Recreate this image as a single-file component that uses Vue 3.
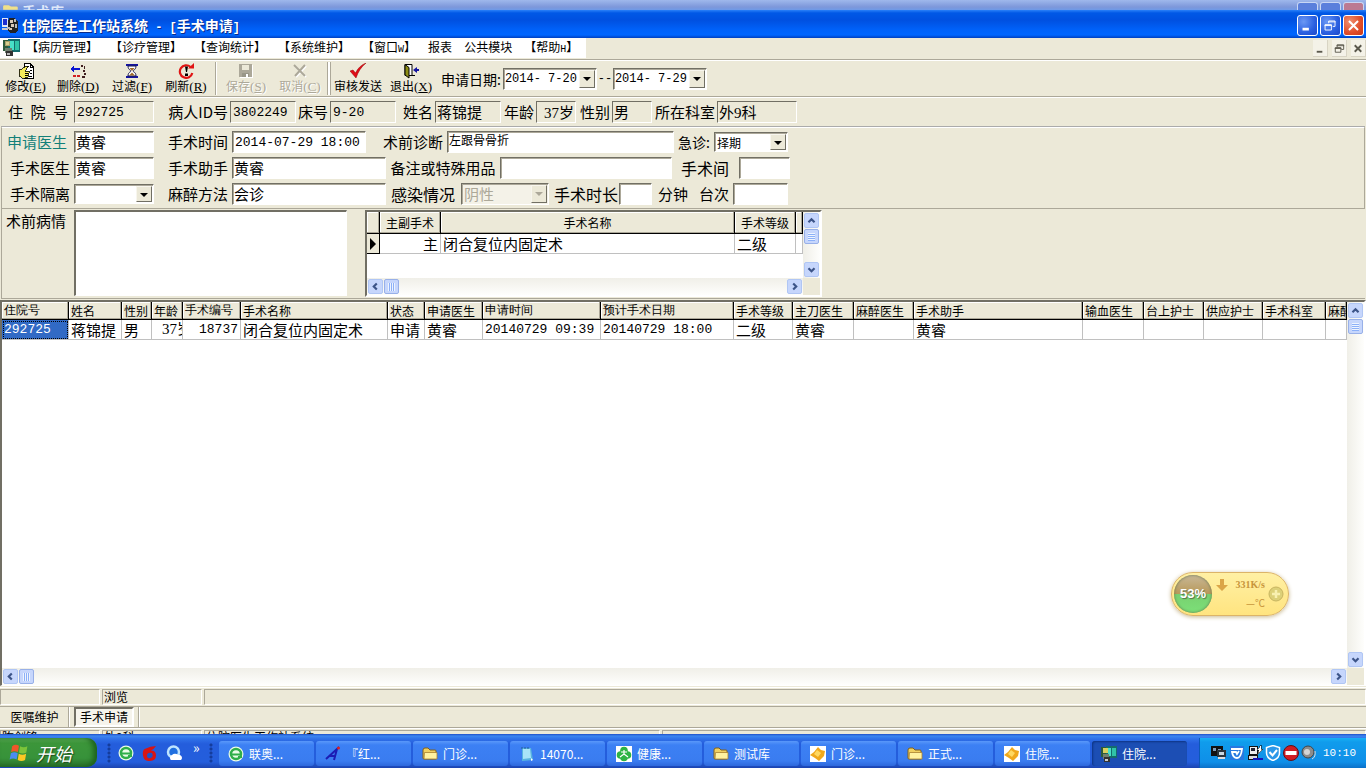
<script setup>
import { ref } from 'vue'

const menus = [
  { text: '【病历管理】' }, { text: '【诊疗管理】' }, { text: '【查询统计】' }, { text: '【系统维护】' },
  { text: '【窗口', key: 'W', end: '】' }, { text: '报表' }, { text: '公共模块' }, { text: '【帮助', key: 'H', end: '】' }
]
const tools = [
  { id: 'edit', text: '修改', key: 'E' },
  { id: 'delete', text: '删除', key: 'D' },
  { id: 'filter', text: '过滤', key: 'F' },
  { id: 'refresh', text: '刷新', key: 'R' },
  { id: 'save', text: '保存', key: 'S', off: true, sep: true },
  { id: 'cancel', text: '取消', key: 'C', off: true },
  { id: 'send', text: '审核发送', sep: true, double: true },
  { id: 'exit', text: '退出', key: 'X' }
]
const patient = [
  { id: 'zyh', label: '住\u2002院\u2002号', value: '292725', num: true },
  { id: 'pid', label: '病人ID号', value: '3802249', num: true },
  { id: 'bed', label: '床号', value: '9-20', num: true },
  { id: 'name', label: '姓名', value: '蒋锦提' },
  { id: 'age', label: '年龄', value: '37岁', right: true },
  { id: 'sex', label: '性别', value: '男' },
  { id: 'dept', label: '所在科室', value: '外9科' }
]
const columns = [
  { t: '住院号', v: '292725', c: 'w1 num picked' },
  { t: '姓名', v: '蒋锦提', c: 'w2' },
  { t: '性别', v: '男', c: 'w3' },
  { t: '年龄', v: '37岁', c: 'w4 age' },
  { t: '手术编号', v: '18737', c: 'w5 num right' },
  { t: '手术名称', v: '闭合复位内固定术', c: 'w6' },
  { t: '状态', v: '申请', c: 'w7' },
  { t: '申请医生', v: '黄睿', c: 'w8' },
  { t: '申请时间', v: '20140729 09:39', c: 'w9 num' },
  { t: '预计手术日期', v: '20140729 18:00', c: 'w10 num' },
  { t: '手术等级', v: '二级', c: 'w11' },
  { t: '主刀医生', v: '黄睿', c: 'w12' },
  { t: '麻醉医生', v: '', c: 'w13' },
  { t: '手术助手', v: '黄睿', c: 'w14' },
  { t: '输血医生', v: '', c: 'w12' },
  { t: '台上护士', v: '', c: 'w13' },
  { t: '供应护士', v: '', c: 'w11' },
  { t: '手术科室', v: '', c: 'w15' },
  { t: '麻醉', v: '', c: 'last' }
]
const tasks = [
  { icon: 'browser', text: '联奥...' },
  { icon: 'pen', text: '『红...' },
  { icon: 'folder', text: '门诊...' },
  { icon: 'note', text: '14070...' },
  { icon: 'health', text: '健康...' },
  { icon: 'folder', text: '测试库' },
  { icon: 'gold', text: '门诊...' },
  { icon: 'folder', text: '正式...' },
  { icon: 'gold', text: '住院...' },
  { icon: 'doctor', text: '住院...', on: true }
]
const notes = ref('')
</script>

<template>
  <div class="screen">
    <div class="behind">
      <svg class="behind-icon" viewBox="0 0 16 5" aria-hidden="true"><path d="M1 5V2q0-1 1-1h4l2 1h5q1 0 1 1v2z" fill="#f0e08a" /></svg>
      <span class="behind-title">手术库</span>
      <i class="bb"></i><i class="bb"></i><i class="bb red"></i>
    </div>

    <header class="title">
      <svg class="i16" viewBox="0 0 16 16" shape-rendering="crispEdges" aria-hidden="true">
        <path d="M0 1h6v9H0z" fill="#dfe6f6" /><path d="M1 2h4v6H1z" fill="#1c2ed0" /><path d="M0 11h8v2H0z" fill="#c8c8d0" />
        <path d="M7 1h6l3 4v8l-2 3H8l-2-3V5z" fill="#222" /><path d="M8 3h3v3H8zM9 7h3v3H9zM7 11h3v2H7z" fill="#d8c8b8" /><path d="M12 2h2v3h-2zM13 7h2v4h-2zM5 10h3v2H5z" fill="#b8b8b8" />
      </svg>
      <h1>住院医生工作站系统<span class="n12"> - [</span>手术申请<span class="n12">]</span></h1>
      <button class="wb" aria-label="最小化"><svg viewBox="0 0 21 21"><path d="M5 13h7v3H5z" fill="#fff" /></svg></button>
      <button class="wb" aria-label="还原"><svg viewBox="0 0 21 21" fill="none" stroke="#fff"><path d="M8.500 8V5.500h7v6H13M8 6.500h8M4.500 9.500h7v6h-7zM4 10.500h8" /></svg></button>
      <button class="wb close" aria-label="关闭"><svg viewBox="0 0 21 21"><path d="M5.500 5.500l10 10M15.500 5.500l-10 10" stroke="#fff" stroke-width="2.200" /></svg></button>
    </header>

    <div class="menubar">
      <nav class="menus" aria-label="主菜单">
        <svg class="i17" viewBox="0 0 16 16" shape-rendering="crispEdges" aria-hidden="true">
          <path d="M0 1h8v10H0z" fill="#2c5a3c" /><path d="M5 0h11v12H5z" fill="#146c6c" /><path d="M7 2h3v8H7z" fill="#48e0c8" /><path d="M11 2h4v8h-4z" fill="#30c4a8" />
          <path d="M2 2h5v5H2z" fill="#a9a16c" /><path d="M3 3h3v3H3z" fill="#d8d090" /><path d="M2 8h6v5H2z" fill="#708070" /><path d="M3 11h6v5H3z" fill="#333" /><path d="M4 13h3v2H4z" fill="#bbb" />
        </svg>
        <button v-for="m in menus" :key="m.text" class="menu">{{ m.text }}<span v-if="m.key" class="n10">{{ m.key }}</span>{{ m.end }}</button>
      </nav>
      <div class="mdi">
        <button aria-label="最小化子窗口"><svg viewBox="0 0 15 15"><path d="M4 10h6v2H4z" fill="#5a584c" /></svg></button>
        <button aria-label="还原子窗口"><svg viewBox="0 0 15 15" fill="none" stroke="#5a584c"><path d="M5.500 6V3.500h7v5H10M5 4.500h8M3.500 6.500h6v5h-6zM3 7.500h7" /></svg></button>
        <button aria-label="关闭子窗口"><svg viewBox="0 0 15 15"><path d="M4 4l7 7M11 4l-7 7" stroke="#5a584c" stroke-width="2" /></svg></button>
      </div>
    </div>

    <div class="toolbar">
      <template v-for="t in tools" :key="t.id">
        <i v-if="t.sep" class="sep" :class="{ double: t.double }"></i>
        <button class="tool" :class="{ off: t.off }" :disabled="t.off">
          <svg class="i16" viewBox="0 0 16 16" aria-hidden="true">
            <g v-if="t.id === 'edit'" shape-rendering="crispEdges">
              <path d="M6 .5h6L15.500 4v11.500H6z" fill="#fff" stroke="#000" /><path d="M12 1v3.500h3" fill="none" stroke="#000" /><path d="M8 3h3M12 7h2M12 10h2M11 13h3" stroke="#000" />
              <path d="M1 7l3-1 4-3 2 1-3 4h4v2l-1 4-3 1H4l-3-2z" fill="#f5ec5a" stroke="#000" stroke-width=".8" /><path d="M7 10h3M7 12h3" stroke="#000" />
            </g>
            <g v-else-if="t.id === 'delete'" shape-rendering="crispEdges">
              <path d="M3 5h7v2H3z" fill="#0a14d0" /><path d="M0 6l4-4v8z" fill="#0a14d0" /><path d="M3 12h3v2H3zM7 12h3v2H7z" fill="#d02020" /><path d="M11 2h2v2h-2zM14 3h1v3h-1zM13 7h2v2h-2zM14 10h2v2h-2zM12 13h3v2h-3z" fill="#402020" />
            </g>
            <g v-else-if="t.id === 'filter'">
              <path d="M2 1h12v2H2zM2 13h12v2H2z" fill="#1414a0" /><path d="M4 3c0 4 3 4 3 5s-3 1-3 5h8c0-4-3-4-3-5s3-1 3-5z" fill="#fff" stroke="#1a1a50" /><path d="M5.500 5h5L8 8zM8 9.500l3 3H5z" fill="#a06a28" />
            </g>
            <g v-else-if="t.id === 'refresh'">
              <path d="M12.500 4A6.300 6.300 0 1 0 14.300 10" fill="none" stroke="#e01414" stroke-width="2.200" /><path d="M10 5.500h6V0z" fill="#e01414" /><path d="M7 3.500h3L9 9H8zM7 10.500h3v2.500H7z" fill="#000" />
            </g>
            <g v-else-if="t.id === 'save'" shape-rendering="crispEdges">
              <path d="M2 2h13v13H2z" fill="#fff" /><path d="M1 1h13v13H1z" fill="#aca899" /><path d="M4 2h7v5H4z" fill="#ece9d8" /><path d="M4 10h7v4H4z" fill="#999688" /><path d="M8 11h2v3H8z" fill="#fff" />
            </g>
            <g v-else-if="t.id === 'cancel'">
              <path d="M3 3l11 11M14 3L4 14" stroke="#fff" stroke-width="2" /><path d="M2 2l11 11M13 2L3 13" stroke="#aca899" stroke-width="2" />
            </g>
            <g v-else-if="t.id === 'send'"><path d="M0 8l3-1 2.500 3C8 5 11 2 16 0 11 4 8 9 6 15z" fill="#e00c18" stroke="#900" stroke-width=".5" /></g>
            <g v-else>
              <path d="M2 1.500h7v11H2z" fill="#fff" stroke="#000" /><path d="M2 1.500l4 3V15l-4-3z" fill="#8c8c14" stroke="#000" /><path d="M9 12.500h3" stroke="#000" /><path d="M10 7l4-3v2h2v2h-2v2z" fill="#1414a0" />
            </g>
          </svg>
          <span>{{ t.text }}<span v-if="t.key" class="key">(<u>{{ t.key }}</u>)</span></span>
        </button>
      </template>
      <div class="dates">
        <label for="d1">申请日期:</label>
        <span class="combo"><select id="d1"><option>2014-&nbsp;7-20</option></select><i class="drop"></i></span>
        <label for="d2" class="dash">--</label>
        <span class="combo"><select id="d2"><option>2014-&nbsp;7-29</option></select><i class="drop"></i></span>
      </div>
    </div>

    <main class="work">
      <div class="row patient">
        <template v-for="p in patient" :key="p.id">
          <label :for="p.id">{{ p.label }}</label>
          <input :id="p.id" class="box" :class="{ num: p.num, right: p.right }" :value="p.value" readonly>
        </template>
      </div>

      <section class="form">
        <div class="row r1">
          <label for="f1" class="teal">申请医生</label><input id="f1" class="box" value="黄睿">
          <label for="f2">手术时间</label><input id="f2" class="box num" value="2014-07-29 18:00">
          <label for="f3">术前诊断</label><input id="f3" class="box small" value="左跟骨骨折">
          <label for="f4" class="l14">急诊:</label><span class="combo"><select id="f4"><option>择期</option></select><i class="drop"></i></span>
        </div>
        <div class="row r2">
          <label for="f5">手术医生</label><input id="f5" class="box" value="黄睿">
          <label for="f6">手术助手</label><input id="f6" class="box" value="黄睿">
          <label for="f7" class="mid">备注或特殊用品</label><input id="f7" class="box">
          <label for="f8" class="l16 mid">手术间</label><input id="f8" class="box">
        </div>
        <div class="row r3">
          <label for="f9">手术隔离</label><span class="combo"><select id="f9"><option></option></select><i class="drop"></i></span>
          <label for="f10">麻醉方法</label><input id="f10" class="box" value="会诊">
          <label for="f11" class="l16 mid">感染情况</label><span class="combo big off"><select id="f11" disabled><option>阴性</option></select><i class="drop"></i></span>
          <label for="f12" class="l16">手术时长</label><input id="f12" class="box">
          <span class="unit">分钟</span>
          <label for="f13">台次</label><input id="f13" class="box">
        </div>
      </section>

      <section class="detail">
        <label for="notes">术前病情</label>
        <textarea id="notes" v-model="notes"></textarea>
        <div class="sheet ops">
          <div class="sheet-body">
            <table>
              <thead><tr><th class="mark"></th><th class="o1">主副手术</th><th class="o2">手术名称</th><th class="o3">手术等级</th><th></th></tr></thead>
              <tbody><tr>
                <td class="mark"><i></i></td><td class="right">主</td><td>闭合复位内固定术</td><td>二级</td><td></td>
              </tr></tbody>
            </table>
          </div>
          <div class="vs">
            <button class="sb" aria-label="向上"><svg viewBox="0 0 15 15"><path d="M4 9.500L7.500 6 11 9.500" /></svg></button>
            <i class="thumb"></i>
            <button class="sb end" aria-label="向下"><svg viewBox="0 0 15 15"><path d="M4 6l3.500 3.500L11 6" /></svg></button>
          </div>
          <div class="hs">
            <button class="sb" aria-label="向左"><svg viewBox="0 0 15 15"><path d="M9 4L5.500 7.500 9 11" /></svg></button>
            <i class="thumb"></i>
            <button class="sb end" aria-label="向右"><svg viewBox="0 0 15 15"><path d="M6 4l3.500 3.500L6 11" /></svg></button>
          </div>
        </div>
      </section>

      <section class="sheet list">
        <div class="sheet-body">
          <table>
            <thead><tr><th v-for="(c, i) in columns" :key="i" :class="c.c">{{ c.t }}</th></tr></thead>
            <tbody><tr><td v-for="(c, i) in columns" :key="i" :class="c.c">{{ c.v }}</td></tr></tbody>
          </table>
        </div>
        <div class="vs">
          <button class="sb" aria-label="向上滚动"><svg viewBox="0 0 15 15"><path d="M4 9.500L7.500 6 11 9.500" /></svg></button>
          <i class="thumb"></i>
          <button class="sb end" aria-label="向下滚动"><svg viewBox="0 0 15 15"><path d="M4 6l3.500 3.500L11 6" /></svg></button>
        </div>
        <div class="hs">
          <button class="sb" aria-label="向左滚动"><svg viewBox="0 0 15 15"><path d="M9 4L5.500 7.500 9 11" /></svg></button>
          <i class="thumb"></i>
          <button class="sb end" aria-label="向右滚动"><svg viewBox="0 0 15 15"><path d="M6 4l3.500 3.500L6 11" /></svg></button>
        </div>
      </section>
    </main>

    <div class="status"><span></span><span>浏览</span><span class="grow"></span></div>
    <div class="tabs">
      <button class="tab">医嘱维护</button><i class="tsep"></i><button class="tab on">手术申请</button><i class="tsep"></i>
    </div>
    <div class="status under"><span>陈剑锋</span><span>外9科</span><span class="app">住院医生工作站系统</span><span class="grow"></span></div>

    <footer class="taskbar">
      <button class="start">
        <svg viewBox="0 0 20 18" aria-hidden="true">
          <path d="M3 3q3-2.500 6.500-.5L8.500 8.500Q5 7 2 8.500z" fill="#f0562a" /><path d="M10.500 3q3.500 2 7 0l-1 6q-3.500 2-7 0z" fill="#7cc43a" />
          <path d="M1.800 9.700q3.200-1.700 6.500 0l-1 6q-3.500-2-6.700 0z" fill="#4a8cf0" /><path d="M9.300 10.200q3.500 2 7 0l-1 6q-3.500 2-7 0z" fill="#fcc824" />
        </svg>
        <span>开始</span>
      </button>
      <i class="grip"></i>
      <div class="quick">
        <a href="#" aria-label="浏览器"><svg class="i16" viewBox="0 0 16 16"><circle cx="8" cy="8" r="7.500" fill="#eafbe8" /><circle cx="8" cy="8" r="5" fill="none" stroke="#2fae4a" stroke-width="2.500" /><path d="M4 8.500h8M10 11h4" stroke="#2fae4a" stroke-width="2" /></svg></a>
        <a href="#" aria-label="音乐"><svg class="i16" viewBox="0 0 16 16"><path d="M14 1q-2 3-5 4.500 5 0 5 5T8 16 1 10.500 4 3.500Q8 1 14 1z" fill="#d81414" /><path d="M10 8q-5-1-5 2.500T8.500 13 10 8z" fill="#2050c8" /></svg></a>
        <a href="#" aria-label="云浏览器"><svg class="i16" viewBox="0 0 16 16"><circle cx="7.500" cy="7" r="5.500" fill="#1f6fe0" stroke="#bfe4ff" stroke-width="2.500" /><path d="M5 15a3 3 0 0 1 1-5 4 4 0 0 1 6 0 3 3 0 0 1 3 5z" fill="#fff" /></svg></a>
        <span class="more">»</span>
      </div>
      <i class="grip"></i>
      <div class="tasks">
        <button v-for="(t, i) in tasks" :key="i" class="task" :class="{ on: t.on }">
          <svg class="i16" viewBox="0 0 16 16" aria-hidden="true">
            <g v-if="t.icon === 'browser'"><circle cx="8" cy="8" r="7.500" fill="#eafbe8" /><circle cx="8" cy="8" r="5" fill="none" stroke="#2fae4a" stroke-width="2.500" /><path d="M4 8.500h8M10 11h4" stroke="#2fae4a" stroke-width="2" /></g>
            <g v-else-if="t.icon === 'pen'"><path d="M1 13L12 3 9 14M4 10h7" fill="none" stroke="#1c1cb4" stroke-width="2" /><circle cx="13.500" cy="2" r="1.500" fill="#e02020" /></g>
            <g v-else-if="t.icon === 'folder'"><path d="M1 4q0-2 2-2h3l2 2h5q1 0 1 1v8H2q-1 0-1-1z" fill="#f0d060" stroke="#80601c" /><path d="M2.500 6.500h12.500v6.500H2z" fill="#fff2a0" stroke="#a88030" stroke-width=".8" /></g>
            <g v-else-if="t.icon === 'note'"><path d="M3 2h9l2 12-11 1z" fill="#58b4e0" /><path d="M4 3h7l1 9-8 1z" fill="#a8e4f8" /><path d="M3 1v2M6 1v2M9 1v2" stroke="#245c94" /><path d="M12 12l2 2-2 1z" fill="#fff" /></g>
            <g v-else-if="t.icon === 'health'"><path d="M0 0h16v16H0z" fill="#fff" /><g fill="#2fb444"><circle cx="8" cy="4.500" r="3.800" /><circle cx="4.500" cy="9" r="3.800" /><circle cx="11.500" cy="9" r="3.800" /><circle cx="8" cy="11.500" r="3.800" /></g><path d="M8 4v4l-4 3M8 8l4 3M5 6h6" stroke="#fff" fill="none" stroke-width="1.200" /></g>
            <g v-else-if="t.icon === 'gold'"><path d="M0 0h16v16H0z" fill="#fff" /><path d="M8 1l3 3 4 1-1 5-5 5-4-3-5-3 4-3z" fill="#f0a81c" /><path d="M7 4l4 3-3 4-4-3z" fill="#ffd860" /></g>
            <g v-else shape-rendering="crispEdges"><path d="M0 1h8v10H0z" fill="#2c5a3c" /><path d="M5 0h11v12H5z" fill="#146c6c" /><path d="M7 2h3v8H7z" fill="#48e0c8" /><path d="M11 2h4v8h-4z" fill="#30c4a8" /><path d="M2 2h5v5H2z" fill="#d8d060" /><path d="M2 8h6v5H2z" fill="#708070" /><path d="M3 11h6v5H3z" fill="#333" /><path d="M4 13h3v2H4z" fill="#ccc" /></g>
          </svg>
          <span>{{ t.text }}</span>
        </button>
      </div>
      <div class="tray">
        <svg class="i16" viewBox="0 0 16 16" shape-rendering="crispEdges"><path d="M0 1h12v10H0z" fill="#111" /><path d="M2 3h3v3H2zM7 4h3v2H7z" fill="#7f9ab8" /><path d="M6 5h9v7H6z" fill="#28343c" /><path d="M8 7h5v3H8z" fill="#c8d8e0" /><path d="M7 12h7v2H7z" fill="#ddd" /></svg>
        <svg class="i16" viewBox="0 0 16 16"><path d="M1 1h14v14H1z" fill="#2878e0" /><path d="M2 4h11q-1 9-5 9T3 7h4l1 2 2-3" fill="none" stroke="#fff" stroke-width="1.800" /></svg>
        <svg class="i16" viewBox="0 0 16 16" shape-rendering="crispEdges"><path d="M2 1h8v8H2z" fill="#eee" stroke="#111" /><path d="M4 3h4v3H4z" fill="#223" /><path d="M1 10h9v4H1z" fill="#ddd" stroke="#111" /><path d="M14 0l-4 5h2l-2 5 6-6h-2z" fill="#fff" stroke="#111" stroke-width=".6" /><path d="M6 13h10v2H6z" fill="#1414b8" /></svg>
        <svg class="i16" viewBox="0 0 16 16"><path d="M8 .5l6.500 2V8q0 5-6.500 7.500Q1.500 13 1.500 8V2.500z" fill="#2c98e8" stroke="#fff" stroke-width="1.500" /><path d="M4.500 7L7.500 10.500 12 5" fill="none" stroke="#fff" stroke-width="2" /></svg>
        <svg class="i16" viewBox="0 0 16 16"><circle cx="8" cy="8" r="7.500" fill="#d01c24" stroke="#601018" /><path d="M2.500 6h11v4h-11z" fill="#fff" /></svg>
        <svg class="i16" viewBox="0 0 16 16"><circle cx="7" cy="7" r="6" fill="#8c8c8c" stroke="#444" /><circle cx="6" cy="7" r="3" fill="#d4d4d4" /><path d="M11 14q4-2 3-8" stroke="#ddd" fill="none" /></svg>
        <time>10:10</time>
      </div>
    </footer>

    <aside class="float">
      <span class="ball">53%</span>
      <svg class="down" viewBox="0 0 12 12" aria-hidden="true"><path d="M4 0h4v6h4l-6 6-6-6h4z" fill="#dba548" /></svg>
      <span class="rates"><b>331K/s</b><span>—℃</span></span>
      <button class="plus" aria-label="加速"><svg viewBox="0 0 16 16"><circle cx="8" cy="8" r="7" fill="#dcd078" stroke="#c8b460" /><path d="M8 4v8M4 8h8" stroke="#f8f0b0" stroke-width="2.500" /></svg></button>
    </aside>
  </div>
</template>

<style>
html, body { margin: 0; background: #ece9d8; }
</style>

<style scoped>
* { box-sizing: border-box; }
.screen {
  position: relative; display: flex; flex-direction: column; height: 100vh; min-height: 560px; overflow: hidden;
  background: #ece9d8; color: #000; font: 12px/16px "Noto Sans CJK SC", sans-serif;
}
button, input, select, textarea { font: inherit; color: inherit; margin: 0; padding: 0; border-radius: 0; }
button { border: 0; background: none; white-space: nowrap; }
svg { display: block; flex: none; }
.i16 { width: 16px; height: 16px; }
.i17 { width: 17px; height: 17px; }
.num, .n10, .n12 { font-family: "Liberation Mono", monospace; }
.n10 { font-size: 10px; line-height: 1px; }
.n12 { font-size: 12px; line-height: 1px; white-space: pre; }
.key { font: 13px/1px "Liberation Serif", serif; }

.behind { display: flex; align-items: flex-end; gap: 2px; flex: none; height: 10px; overflow: hidden; padding: 0 2px; background: linear-gradient(#9fb8ec, #7d97da 70%, #6f9ae8); }
.behind-icon { width: 18px; height: 6px; }
.behind-title { flex: 1; height: 7px; overflow: hidden; color: #dfe8fa; font-weight: bold; font-size: 14px; line-height: 16px; }
.bb { width: 21px; height: 8px; border: 1px solid #c8d6f4; border-bottom: 0; border-radius: 3px 3px 0 0; background: #5a7fdc; }
.bb.red { background: #bc7a92; }

.title { display: flex; align-items: center; gap: 2px; flex: none; height: 28px; padding: 2px 2px 0; background: linear-gradient(#2a80f8 0, #0058e6 3px, #0050e0 10px, #0062fa 20px, #0066ff 25px, #0040c0 28px); }
.title h1 { flex: 1; margin: 0 0 0 2px; font-size: 14px; line-height: 20px; color: #fff; text-shadow: 1px 1px #0a2a8a; white-space: nowrap; }
.wb { width: 21px; height: 21px; border: 1px solid #fff; border-radius: 3px; background: radial-gradient(circle at 30% 30%, #6a98f4, #2a5fe0 60%, #1c48c8); }
.wb svg { width: 19px; height: 19px; }
.wb.close { background: radial-gradient(circle at 30% 30%, #f09070, #e04c28 60%, #c83818); }

.menubar { display: flex; justify-content: space-between; flex: none; height: 22px; border-bottom: 1px solid #aca899; }
.menus { display: flex; align-items: center; gap: 12px; height: 20px; padding: 0 8px 2px 3px; background: #fff; }
.menus .i17 { margin-right: -6px; }
.menu { font-size: 12px; line-height: 16px; }
.mdi { display: flex; gap: 4px; padding-top: 2px; }
.mdi button { width: 15px; height: 17px; background: #f4f2e8; border-right: 1px solid #d8d4c4; border-bottom: 1px solid #d8d4c4; }
.mdi svg { width: 14px; height: 15px; }

.toolbar { display: flex; align-items: center; flex: none; height: 37px; border-top: 1px solid #fff; border-bottom: 1px solid #aca899; }
.tool { display: flex; flex-direction: column; align-items: center; width: 54px; height: 32px; line-height: 14px; }
.tool:first-child { width: 51px; }
.tool:last-of-type { width: 52px; }
.tool.off { color: #aca899; text-shadow: 1px 1px #fff; }
.sep { width: 2px; height: 33px; margin: 0 2px; border-left: 1px solid #aca899; border-right: 1px solid #fff; }
.sep.double { width: 4px; margin: 0; border: 1px solid #aca899; border-width: 0 1px; background: #fff; }
.dates { display: flex; align-items: center; padding-left: 4px; font-size: 14px; }
.dates .combo { width: 94px; height: 22px; }
.dates .combo select { padding-left: 1px; font: 12px "Liberation Mono", monospace; }
.dates label { padding-right: 2px; }
.dates .dash { width: 16px; padding: 0; text-align: center; font: 12px "Liberation Mono", monospace; }

.combo { position: relative; display: flex; height: 20px; border: 1px solid; border-color: #716f64 #fff #fff #716f64; box-shadow: inset 1px 1px #aca899; background: #fff; font-size: 12px; }
.combo select { width: 100%; border: 0; padding: 0 18px 0 2px; appearance: none; background: none; opacity: 1; }
.combo.big { height: 22px; font-size: 15px; }
.combo.off { background: #f4f2e8; color: #aca899; }
.drop { position: absolute; top: 1px; right: 1px; bottom: 1px; width: 16px; pointer-events: none; background: #ece9d8; border: 1px solid; border-color: #f8f6ee #716f64 #716f64 #f8f6ee; }
.drop::after { content: ""; position: absolute; left: 3px; top: 6px; border: 4px solid transparent; border-top-color: currentColor; border-bottom: 0; }

.work { display: flex; flex: 1; flex-direction: column; min-height: 0; border-top: 1px solid #fff; }
.row { display: grid; align-items: center; font-size: 15px; line-height: 20px; white-space: nowrap; }
.row label { padding-right: 4px; text-align: right; }
.row .mid { padding: 0; text-align: center; }
.row .teal { padding-right: 7px; color: #128078; }
.row .l14 { font-size: 14px; }
.row .l16 { padding-right: 1px; font-size: 16px; }
.box { min-width: 0; width: 100%; height: 22px; padding: 0 1px 2px; border: 1px solid; border-color: #716f64 #fff #fff #716f64; box-shadow: inset 1px 1px #aca899; background: #fff; font: 15px "Liberation Serif", "Noto Sans CJK SC", serif; outline: 0; }
.box.num { padding-left: 2px; padding-bottom: 0; font: 13px "Liberation Mono", monospace; }
.box.small { font-size: 12px; padding-bottom: 4px; }
.right { text-align: right; }
.patient { flex: none; height: 28px; grid-template-columns: 74px 80px 76px 66px 34px 66px 39px 66px 35px 40px 36px 40px 65px 80px; }
.patient .box { background: #ece9d8; box-shadow: none; }
.patient label { padding-right: 2px; }
.patient label:first-child { padding-right: 6px; }
.form { display: flex; flex-direction: column; gap: 4px; flex: none; height: 83px; padding: 3px 0 0; margin: 0 1px; border: 1px solid #aca899; border-top: 2px groove #fff; }
.r1 { grid-template-columns: 72px 80px 78px 134px 81px 227px 40px 74px; }
.r2 { grid-template-columns: 72px 80px 78px 154px 114px 172px 67px 51px; }
.r3 { grid-template-columns: 72px 80px 78px 154px 75px 88px 70px 33px 42px 39px 55px; }
.unit { text-align: center; }

.detail { display: grid; grid-template-columns: 72px 273px 457px; flex: none; height: 90px; padding-top: 1px; margin: 0 1px; border-bottom: 1px solid #aca899; border-left: 1px solid #aca899; font-size: 15px; }
.detail > label { padding: 1px 0 0 4px; line-height: 20px; }
.detail textarea { height: 86px; resize: none; border: 1px solid; border-color: #716f64 #fff #fff #716f64; border-width: 2px 1px 1px 2px; background: #fff; outline: 0; }

.sheet { display: grid; grid-template-columns: minmax(0, 1fr) 17px; grid-template-rows: minmax(0, 1fr) 17px; border: 2px solid; border-color: #716f64 #fff #fff #716f64; background: #ece9d8; }
.sheet-body { overflow: hidden; background: #fff; }
table { width: 100%; table-layout: fixed; border-collapse: separate; border-spacing: 0; }
th, td { overflow: hidden; padding: 0 2px; white-space: nowrap; text-align: left; font-weight: normal; }
th { height: 18px; font: 12px/16px "Noto Sans CJK SC", sans-serif; background: #ece9d8; border-right: 1px solid #000; border-bottom: 1px solid #000; box-shadow: inset -1px -1px #aca899, inset 1px 1px #fff; }
td { height: 20px; font-size: 15px; line-height: 19px; border-right: 1px solid #c0c0c0; border-bottom: 1px solid #c0c0c0; }
td.num { font-size: 13px; }
th.right { text-align: left; }
td.right { text-align: right; }
.ops { width: 457px; height: 87px; margin-left: 18px; }
.ops th { height: 22px; text-align: center; }
th.mark, td.mark { width: 13px; padding: 0 3px; background: #ece9d8; border-color: #000; }
.mark i { display: block; border: 6px solid transparent; border-left-color: #000; border-right: 0; }
.o1 { width: 61px; }
.o2 { width: 294px; }
.o3 { width: 61px; }
.list { flex: 1; min-height: 0; margin: 1px 0; border-width: 2px 2px 1px; }
.w1 { width: 67px; } .w2 { width: 53px; } .w3 { width: 30px; } .w4 { width: 31px; } .w5 { width: 58px; }
.w6 { width: 147px; } .w7 { width: 37px; } .w8 { width: 58px; } .w9 { width: 118px; } .w10 { width: 133px; }
.w11 { width: 59px; } .w12 { width: 61px; } .w13 { width: 60px; } .w14 { width: 169px; } .w15 { width: 63px; }
td.age { padding-left: 10px; font-family: "Liberation Serif", "Noto Sans CJK SC", serif; }
td.picked { color: #fff; background: #316ac5; outline: 1px dotted #000; outline-offset: -2px; }

.vs, .hs { display: flex; gap: 1px; padding: 1px; background: linear-gradient(90deg, #f0efe8, #fefefc); }
.vs { flex-direction: column; }
.hs { background: linear-gradient(#f0efe8, #fefefc); }
.sb, .thumb { flex: none; width: 15px; height: 15px; border: 1px solid #b0c6f4; border-radius: 2px; background: #c6d6fc; }
.sb svg { width: 13px; height: 13px; fill: none; stroke: #3c5488; stroke-width: 2.500; }
.vs .end { margin-top: auto; }
.hs .end { margin-left: auto; }
.thumb { display: flex; align-items: center; justify-content: center; border-color: #98b0e8; }
.thumb::after { content: ""; width: 7px; height: 8px; background: repeating-linear-gradient(#eef4fe 0 1px, #8cb0f8 1px 2px); }
.hs .thumb::after { background: repeating-linear-gradient(90deg, #eef4fe 0 1px, #8cb0f8 1px 2px); }

.status { display: flex; gap: 2px; flex: none; height: 19px; padding: 1px 0; border-top: 1px solid #fff; }
.status span { width: 100px; padding-left: 1px; overflow: hidden; line-height: 14px; white-space: nowrap; border: 1px solid; border-color: #aca899 #fff #fff #aca899; }
.status .grow { flex: 1; }
.status .app { width: 456px; }
.tabs { display: flex; align-items: center; flex: none; height: 22px; padding-left: 1px; border-top: 1px solid #aca899; border-bottom: 1px solid #aca899; }
.tab { width: 67px; height: 20px; }
.tab.on { width: 60px; margin: 0 4px; border: 2px solid; border-color: #716f64 #fff #fff #716f64; background: #f6f4ec; }
.tsep { width: 2px; height: 20px; border-left: 1px solid #aca899; border-right: 1px solid #fff; }
.under { height: 6px; padding-bottom: 0; overflow: hidden; }
.under span { height: 20px; line-height: 12px; }

.taskbar { display: flex; align-items: stretch; flex: none; height: 34px; background: linear-gradient(#1f4fc8 0, #3c86f0 2px, #2f70e8 5px, #245ddc 10px, #245edc 28px, #1c44b0 34px); color: #fff; }
.start { display: flex; align-items: center; gap: 6px; width: 97px; margin: 4px 0 1px; padding-left: 9px; border-radius: 0 10px 10px 0; background: linear-gradient(#5fb05c 0, #3c963a 5px, #37923a 20px, #2a6e2a 29px); box-shadow: inset -4px 0 5px #1e641e; color: #fff; }
.start svg { width: 21px; height: 19px; }
.start span { font-size: 18px; font-style: italic; line-height: 24px; text-shadow: 1px 1px 1px #1c4a1c; }
.grip { width: 4px; margin: 9px 7px 5px 10px; background: radial-gradient(circle, #143c9c 1px, transparent 2px) 0 0 / 4px 4px; }
.quick { display: flex; align-items: center; gap: 8px; padding: 4px 0 0 0; }
.more { width: 12px; margin-left: 3px; align-self: flex-start; font-size: 14px; line-height: 18px; }
.quick + .grip { margin-left: 4px; margin-right: 6px; }
.tasks { display: flex; flex: 1; gap: 2px; min-width: 0; padding: 7px 8px 2px 0; }
.task { display: flex; align-items: center; gap: 5px; flex: 0 1 95px; min-width: 0; padding-left: 9px; overflow: hidden; border-radius: 3px; background: linear-gradient(#5a98fa 0, #3c80f4 4px, #3a7cf0 20px, #2e68dc); color: #fff; font: 12px/16px "Noto Sans CJK SC", sans-serif; }
.task.on { background: #1c4eb4; box-shadow: inset 1px 1px 2px #0e3484; }
.tray { display: flex; align-items: center; gap: 2px; flex: none; width: 167px; margin-top: 4px; padding-left: 11px; border-left: 1px solid #0a58b8; background: linear-gradient(#18b0f4 0, #109cec 4px, #0f8fe8 24px, #0c70c8); }
.tray time { margin-left: 4px; font: 11px "Liberation Mono", monospace; }

.float { position: absolute; right: 77px; bottom: 152px; display: flex; align-items: center; width: 118px; height: 44px; padding: 2px; border: 1px solid #dcb468; border-radius: 22px; background: linear-gradient(#fff0a4, #ffe480); box-shadow: 0 1px 4px #c8b890; color: #c8953c; }
.ball { width: 38px; height: 38px; border-radius: 50%; background: linear-gradient(#c8b898, #b89858 50%, #78d070 50%, #7ce078); box-shadow: inset 0 0 3px #60704c; color: #fff; font: bold 13px/38px "Liberation Sans", sans-serif; text-align: center; text-shadow: 1px 1px 1px #567048; }
.down { width: 12px; height: 12px; margin: 0 3px 18px 4px; }
.rates { display: flex; flex-direction: column; gap: 4px; width: 34px; text-align: right; font-size: 10px; line-height: 14px; }
.rates b { font: bold 10px/14px "Liberation Serif", serif; }
.plus { width: 16px; height: 16px; margin-left: 3px; }
</style>
